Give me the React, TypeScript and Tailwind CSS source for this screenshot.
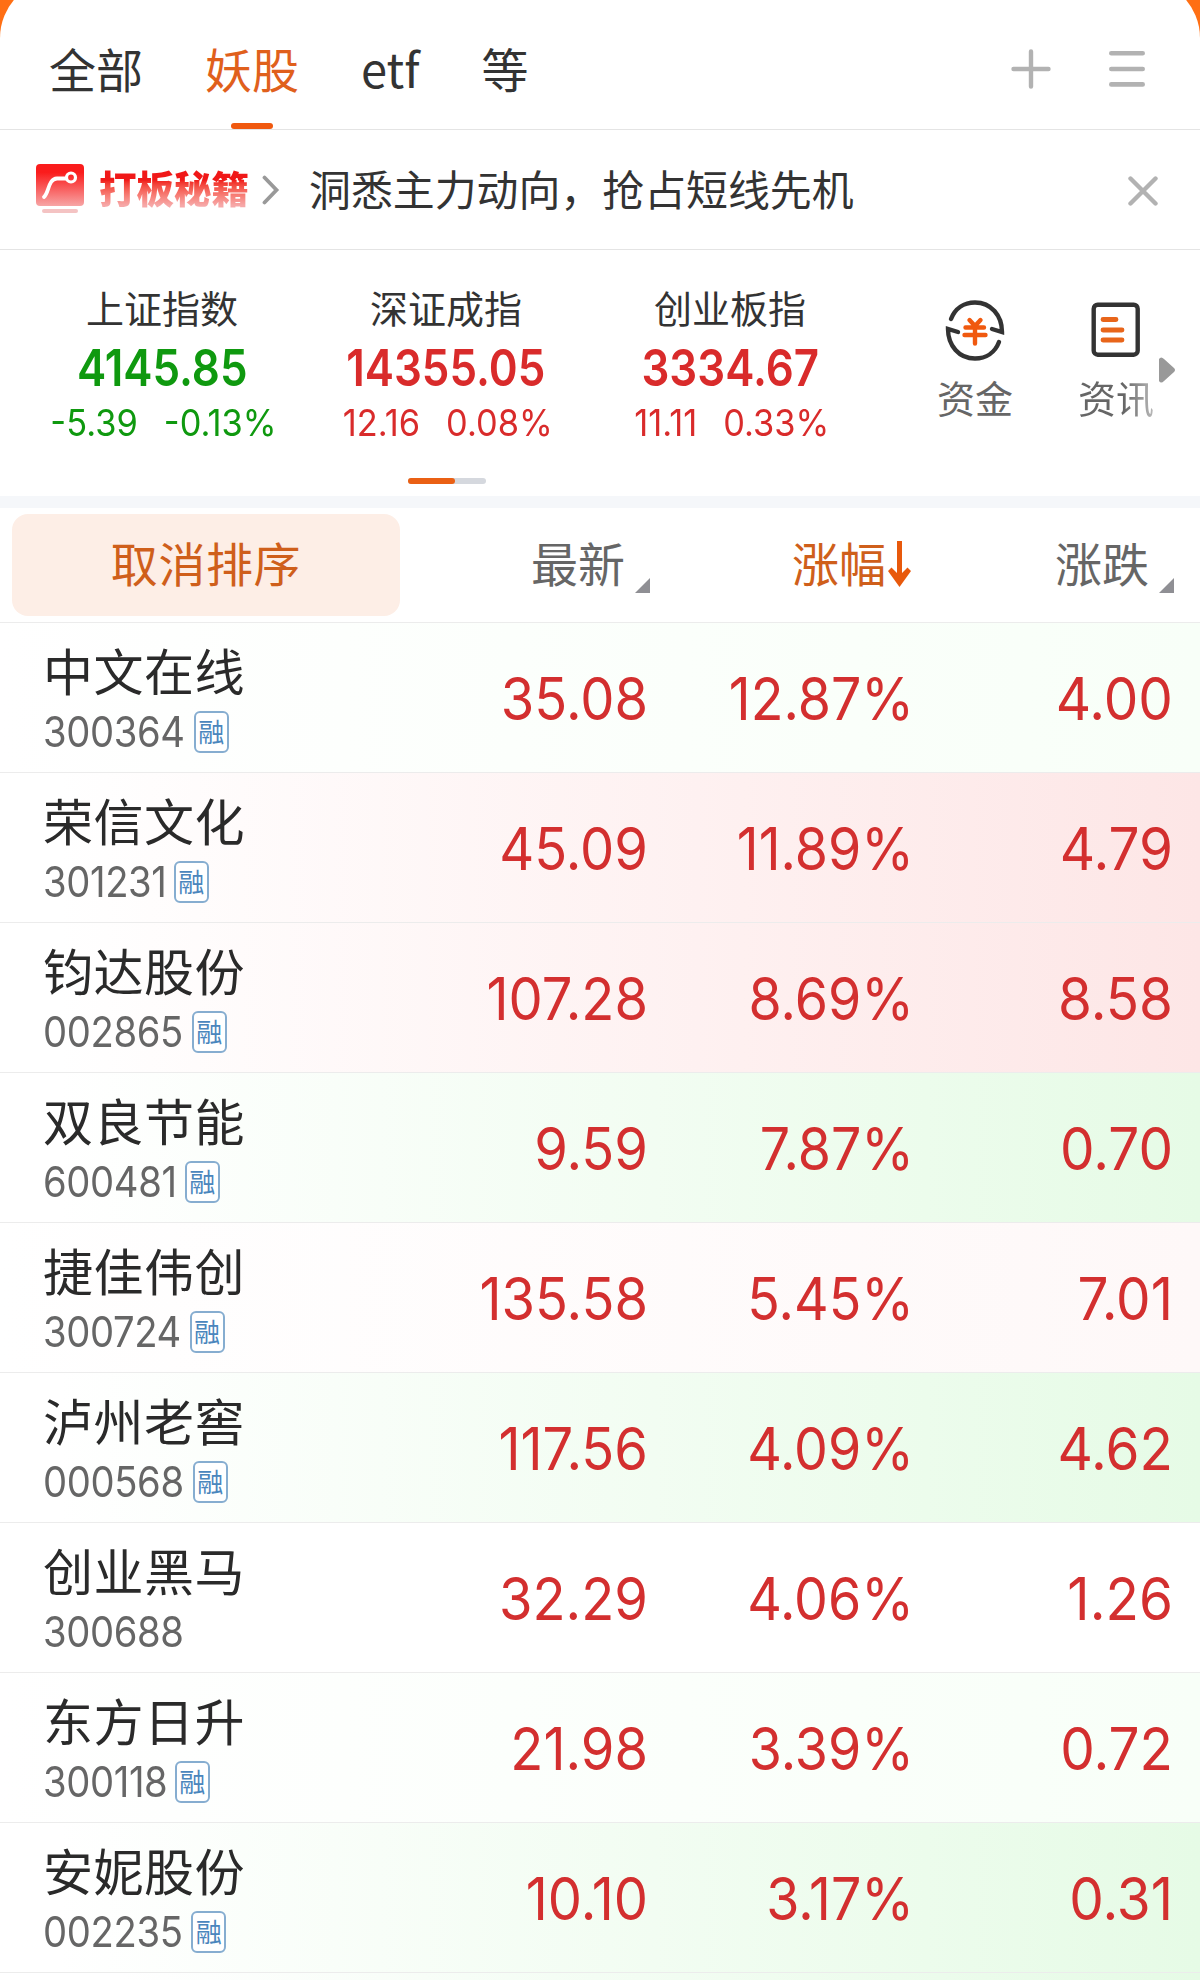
import React from 'react';

type Tint = 'none' | 'greenFaint' | 'green' | 'red' | 'redFaint';

interface Stock {
  name: string;
  code: string;
  margin: boolean;
  price: string;
  percent: string;
  change: string;
  tint: Tint;
}

interface MarketIndex {
  name: string;
  value: string;
  diff: string;
  percent: string;
  up: boolean;
}

const tabs = ['全部', '妖股', 'etf', '等'];
const activeTab = '妖股';

const indices: MarketIndex[] = [
  { name: '上证指数', value: '4145.85', diff: '-5.39', percent: '-0.13%', up: false },
  { name: '深证成指', value: '14355.05', diff: '12.16', percent: '0.08%', up: true },
  { name: '创业板指', value: '3334.67', diff: '11.11', percent: '0.33%', up: true },
];

const stocks: Stock[] = [
  { name: '中文在线', code: '300364', margin: true, price: '35.08', percent: '12.87%', change: '4.00', tint: 'greenFaint' },
  { name: '荣信文化', code: '301231', margin: true, price: '45.09', percent: '11.89%', change: '4.79', tint: 'red' },
  { name: '钧达股份', code: '002865', margin: true, price: '107.28', percent: '8.69%', change: '8.58', tint: 'red' },
  { name: '双良节能', code: '600481', margin: true, price: '9.59', percent: '7.87%', change: '0.70', tint: 'green' },
  { name: '捷佳伟创', code: '300724', margin: true, price: '135.58', percent: '5.45%', change: '7.01', tint: 'redFaint' },
  { name: '泸州老窖', code: '000568', margin: true, price: '117.56', percent: '4.09%', change: '4.62', tint: 'green' },
  { name: '创业黑马', code: '300688', margin: false, price: '32.29', percent: '4.06%', change: '1.26', tint: 'none' },
  { name: '东方日升', code: '300118', margin: true, price: '21.98', percent: '3.39%', change: '0.72', tint: 'greenFaint' },
  { name: '安妮股份', code: '002235', margin: true, price: '10.10', percent: '3.17%', change: '0.31', tint: 'green' },
];

const tintClass: Record<Tint, string> = {
  none: 'bg-white',
  greenFaint: 'bg-linear-to-r from-white to-[#f8fff8]',
  green: 'bg-linear-to-r from-white from-5% to-[#e6fbe6]',
  red: 'bg-linear-to-r from-white from-5% to-[#fde6e6]',
  redFaint: 'bg-linear-to-r from-white to-[#fef8f8]',
};

const NUM = "font-['Inter','Noto_Sans_CJK_SC',sans-serif]";

// Top tab strip with the add / menu actions
function TabBar() {
  return (
    <nav className="-mt-[21px] flex h-[151px] items-stretch rounded-t-[59px] border-b border-[#e4e4e4] bg-white pt-[21px] pr-[55px] pl-[49px]">
      <div className="flex gap-[62px]">
        {tabs.map((tab) => (
          <button
            key={tab}
            className={`relative pt-[5px] text-[47px] leading-none ${tab === activeTab ? 'text-[#e0601c]' : 'text-[#333]'}`}
          >
            {tab}
            {tab === activeTab && (
              <span className="absolute bottom-0 left-1/2 h-[6px] w-[42px] -translate-x-1/2 rounded-full bg-[#f0590f]" />
            )}
          </button>
        ))}
      </div>
      <div className="ml-auto flex items-center gap-[58px] pt-[9px]">
        <svg width="40" height="40" viewBox="0 0 40 40" stroke="#b2b2b2" strokeWidth="4.4" strokeLinecap="round">
          <path d="M20 2.5v35M2.5 20h35" />
        </svg>
        <svg width="36" height="38" viewBox="0 0 36 38" stroke="#b2b2b2" strokeWidth="4.6" strokeLinecap="round">
          <path d="M2.3 3.3h31.4M2.3 19h31.4M2.3 34.4h31.4" />
        </svg>
      </div>
    </nav>
  );
}

function PromoBanner() {
  return (
    <section className="flex h-[120px] items-center border-b border-[#e4e4e4] bg-white pr-[42px] pl-[36px]">
      <svg className="mb-[2px]" width="48" height="50" viewBox="0 0 48 50" fill="none">
        <defs>
          <linearGradient id="promo" x1="0" y1="0" x2="0" y2="1">
            <stop offset="0.2" stopColor="#fa1c1c" />
            <stop offset="1" stopColor="#f7a5a5" />
          </linearGradient>
        </defs>
        <rect width="48" height="42" rx="4" fill="url(#promo)" />
        <rect x="6" y="45" width="36" height="4" rx="2" fill="#f4c3c3" />
        <path d="M8 33C13 29 12 15 21 14.5h9" stroke="#fff" strokeWidth="3.8" strokeLinecap="round" />
        <circle cx="35" cy="13.5" r="4.5" stroke="#fff" strokeWidth="3.2" />
      </svg>
      <span className="mb-[6px] ml-[15px] bg-linear-to-b from-[#f01818] from-35% to-[#f6a8a8] to-90% bg-clip-text text-[37.5px] leading-[46px] font-black text-transparent">
        打板秘籍
      </span>
      <svg className="ml-[13px]" width="18" height="30" viewBox="0 0 18 30" fill="none" stroke="#999" strokeWidth="3.8" strokeLinecap="round">
        <path d="M2.5 2.5 14.5 15 2.5 27.5" />
      </svg>
      <p className="ml-[29px] pb-[4px] text-[41.9px] leading-none text-[#333]">洞悉主力动向，抢占短线先机</p>
      <svg className="mt-[3px] ml-auto" width="30" height="30" viewBox="0 0 30 30" stroke="#b2b2b2" strokeWidth="4.4" strokeLinecap="round">
        <path d="m2.5 2.5 25 25m0-25-25 25" />
      </svg>
    </section>
  );
}

function IndexCard({ item }: { item: MarketIndex }) {
  return (
    <div className={`flex w-[284px] flex-col items-center ${NUM} ${item.up ? 'text-[#d92b2b]' : 'text-[#0f990f]'}`}>
      <div className="text-[38px] leading-[56px] text-[#333]">{item.name}</div>
      <div className="scale-x-86 text-[51px] leading-[61px] font-semibold">{item.value}</div>
      <div className="flex scale-x-93 gap-[28px] pl-[4px] text-[37px] leading-[50px]">
        <span>{item.diff}</span>
        <span>{item.percent}</span>
      </div>
    </div>
  );
}

function MarketSummary() {
  return (
    <section className="flex h-[246px] flex-col bg-white">
      <div className="flex pt-[31px] pl-[20px]">
        {indices.map((item) => (
          <IndexCard key={item.name} item={item} />
        ))}
        <div className="relative ml-[65px] flex gap-[65px] pt-[18px] text-[38px] leading-[50px] text-[#666]">
          <div className="flex flex-col items-center gap-[11px]">
            <svg width="60" height="62" viewBox="0 0 60 62" fill="none" strokeWidth="4.4" strokeLinecap="round">
              <path d="M6 20C10 9.500 19 3.500 30 3.500c16 0 27 13 27 29.500l-10-3" stroke="#333" />
              <path d="M54 43C50 53.500 41 59.500 30 59.500c-16 0-27-13-27-29.500l10 3" stroke="#333" />
              <path d="m24.500 21 5.500 6 5.500-6M20.500 28.500h18.500M19.500 36h21M30 27v17.500" stroke="#f0590f" />
            </svg>
            <span>资金</span>
          </div>
          <div className="flex flex-col items-center gap-[11px]">
            <svg width="60" height="62" viewBox="0 0 60 62" fill="none" strokeWidth="4.4" strokeLinecap="round">
              <rect x="7.7" y="5.7" width="44" height="50" rx="4" stroke="#333" />
              <path d="M17 20.500h13M17 31h19M17 41h19" stroke="#e8651a" strokeWidth="4.8" />
            </svg>
            <span className="bg-linear-to-r from-[#666] from-60% to-[#bbb] bg-clip-text text-transparent">资讯</span>
          </div>
          <svg className="absolute top-[76px] left-[222px]" width="16" height="26" viewBox="0 0 16 26">
            <path d="M0 2Q2-1 5 2l10 9q2 2 0 4L5 24q-3 3-5 0z" fill="#999" />
          </svg>
        </div>
      </div>
      <div className="mx-auto mt-auto mb-[12px] flex h-[6px] w-[78px] -translate-x-[153px] rounded-full bg-[#d5d8de]">
        <span className="w-[47px] rounded-full bg-[#ea6014]" />
      </div>
    </section>
  );
}

function SortMark() {
  return (
    <svg className="mt-[48px] ml-[10px]" width="15" height="15" viewBox="0 0 15 15">
      <path d="M15 0v15H0z" fill="#8f8f94" />
    </svg>
  );
}

function TableHeader() {
  return (
    <div className="flex h-[115px] items-center border-b border-[#ececec] bg-white pr-[26px] pl-[12px] text-[47px] leading-none text-[#666]">
      <button className="h-[102px] w-[388px] rounded-[16px] bg-[#fdeee6] pb-[7px] tracking-[0.6px] text-[#cf5f1b]">取消排序</button>
      <div className="flex w-[250px] items-center justify-end pb-[7px]">
        最新
        <SortMark />
      </div>
      <div className="flex w-[261px] items-center justify-end pb-[7px] text-[#cf5f1b]">
        涨幅
        <svg className="mt-[4px] ml-[2px]" width="23" height="46" viewBox="0 0 23 46" fill="#e8590c">
          <path d="M9 0h5v32l5.500-5.500L23 30 11.500 46 0 30l3.500-3.500L9 32z" />
        </svg>
      </div>
      <div className="flex w-[263px] items-center justify-end pb-[7px]">
        涨跌
        <SortMark />
      </div>
    </div>
  );
}

function StockRow({ stock }: { stock: Stock }) {
  return (
    <div className={`flex h-[150px] items-center border-b border-[#ececec] pr-[27px] pl-[43px] ${tintClass[stock.tint]}`}>
      <div className="w-[305px] pt-[1px]">
        <div className="text-[50px] leading-[56px] tracking-[0.5px] text-[#2a2a2a]">{stock.name}</div>
        <div className="flex items-center pt-[11px]">
          <span className={`${NUM} origin-left scale-x-91 text-[42px] leading-[48px] tracking-[-0.4px] text-[#666]`}>
            {stock.code}
          </span>
          {stock.margin && (
            <span className="ml-[-5px] flex h-[42px] w-[35px] items-center justify-center rounded-[6px] border-2 border-[#86add0] bg-white pb-[2px] text-[26px] leading-none text-[#4a86bd]">
              融
            </span>
          )}
        </div>
      </div>
      <div className={`flex flex-1 justify-end pt-[3px] text-[59px] text-[#d32f2f] ${NUM}`}>
        <span className="w-[300px] origin-right scale-x-92 text-right">{stock.price}</span>
        <span className="w-[266px] origin-right scale-x-91 text-right">{stock.percent}</span>
        <span className="w-[259px] origin-right scale-x-93 text-right">{stock.change}</span>
      </div>
    </div>
  );
}

export default function App() {
  return (
    <main className="h-[1980px] w-[1200px] overflow-hidden bg-[#ff6f14] font-['Noto_Sans_CJK_SC',sans-serif]">
      <TabBar />
      <PromoBanner />
      <MarketSummary />
      <div className="h-[12px] bg-[#f5f7fa]" />
      <TableHeader />
      {stocks.map((stock) => (
        <StockRow key={stock.code} stock={stock} />
      ))}
      <div className="h-[8px] bg-linear-to-r from-white from-10% to-[#e6fbe6]" />
    </main>
  );
}
